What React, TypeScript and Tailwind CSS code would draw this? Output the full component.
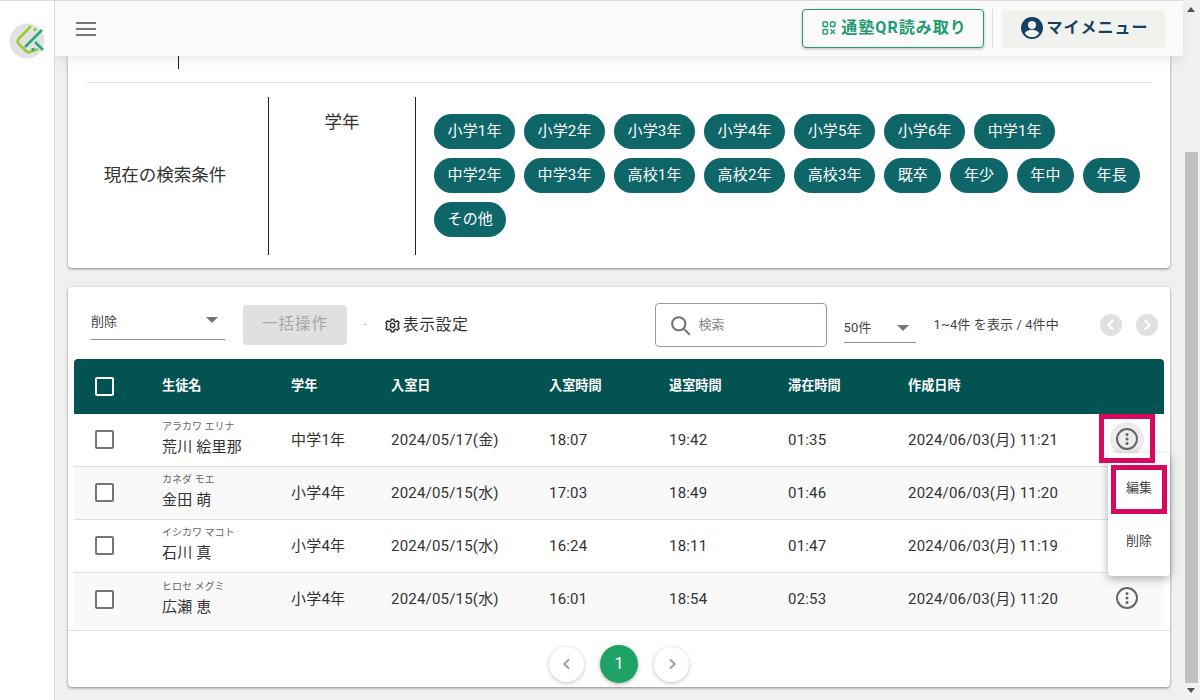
import React from "react";

const gradesRows = ["小学1年","小学2年","小学3年","小学4年","小学5年","小学6年","中学1年","中学2年","中学3年","高校1年","高校2年","高校3年","既卒","年少","年中","年長","その他"];
const students = [
  { kana: "アラカワ エリナ", name: "荒川 絵里那", grade: "中学1年", date: "2024/05/17(金)", inT: "18:07", outT: "19:42", stay: "01:35", created: "2024/06/03(月) 11:21" },
  { kana: "カネダ モエ", name: "金田 萌", grade: "小学4年", date: "2024/05/15(水)", inT: "17:03", outT: "18:49", stay: "01:46", created: "2024/06/03(月) 11:20" },
  { kana: "イシカワ マコト", name: "石川 真", grade: "小学4年", date: "2024/05/15(水)", inT: "16:24", outT: "18:11", stay: "01:47", created: "2024/06/03(月) 11:19" },
  { kana: "ヒロセ メグミ", name: "広瀬 恵", grade: "小学4年", date: "2024/05/15(水)", inT: "16:01", outT: "18:54", stay: "02:53", created: "2024/06/03(月) 11:20" },
];
const gridCols = "grid grid-cols-[88px_129px_100px_158px_120px_119px_120px_1fr] items-center";

function Kebab() {
  return (
    <svg width="24" height="24" viewBox="0 0 24 24" fill="none">
      <circle cx="12" cy="12" r="10" stroke="#666" strokeWidth="2" />
      <circle cx="12" cy="7.5" r="1.5" fill="#666" />
      <circle cx="12" cy="12" r="1.5" fill="#666" />
      <circle cx="12" cy="16.5" r="1.5" fill="#666" />
    </svg>
  );
}
function Caret() {
  return <span className="h-0 w-0 border-x-[6px] border-t-[6px] border-x-transparent border-t-[#757575]" />;
}

export default function App() {
  return (
    <div className="relative flex h-[700px] w-[1200px] overflow-hidden bg-[#eff1ee] font-['Roboto','Noto_Sans_CJK_JP',sans-serif] text-[#333]">
      <aside className="relative z-20 flex w-[55px] shrink-0 justify-center border-r border-t border-[#dcdcdc] bg-white pt-[22px]">
        <svg width="36" height="36" viewBox="0 0 36 36" className="ml-[-1px]">
          <circle cx="18" cy="18" r="17.5" fill="#e2e2e2" />
          <path d="M21 4 L9.500 16 Q8 18.500 9.500 20.500 L17.500 28.500 Q19 30 21 29 L28 26.500" fill="none" stroke="#9acb3c" strokeWidth="2.800" strokeLinecap="round" />
          <path d="M33 7 L16 24" fill="none" stroke="#2fa878" strokeWidth="2.600" />
          <path d="M26 19 L34 27" fill="none" stroke="#2fa878" strokeWidth="2.600" />
          <rect x="24.500" y="5" width="3" height="3" fill="#9acb3c" />
          <rect x="22.500" y="25" width="3" height="3" fill="#2fa878" />
        </svg>
      </aside>

      <div className="flex w-[1128px] shrink-0 flex-col">
        <header className="relative z-10 flex h-[56px] shrink-0 items-center border-t border-[#dcdcdc] bg-[#fafafa] pl-[20px] pr-[18px] shadow-[0_4px_10px_rgba(0,0,0,0.08)]">
          <svg width="22" height="16" viewBox="0 0 22 16" fill="none" stroke="#777" strokeWidth="2">
            <path d="M1 2h20M1 8h20M1 14h20" />
          </svg>
          <button className="ml-auto flex h-[39px] w-[182px] items-center justify-center gap-[5px] rounded-[4px] border-[1.5px] border-[#1f9a72] bg-[#fafafa] pb-[1px] pl-[3px] text-[16px] font-bold tracking-[1px] text-[#1f9a72] shadow-[0_1px_3px_rgba(0,0,0,0.25)]">
            <svg width="14" height="14" viewBox="0 0 14 14" fill="none" stroke="#1f9a72" strokeWidth="1.4">
              <rect x="1" y="1" width="4.5" height="4.5" rx="1" />
              <rect x="8.5" y="1" width="4.5" height="4.5" rx="1" />
              <rect x="1" y="8.5" width="4.5" height="4.5" rx="1" />
              <path d="M8.5 8.5l4.5 4.5M13 8.5l-4.5 4.5" strokeWidth="1.2" />
            </svg>
            通塾QR読み取り
          </button>
          <span className="ml-[8px] mr-[9px] h-[39px] w-px bg-[#dedede]" />
          <button className="flex h-[38px] w-[163px] items-center justify-center gap-[2px] rounded-[4px] bg-[#f0f2ee] pb-[1px] pl-[2px] text-[16px] font-bold tracking-[1px] text-[#173f5f]">
            <svg width="24" height="24" viewBox="0 0 24 24" fill="#173f5f">
              <path d="M12 1a11 11 0 1 0 0 22 11 11 0 0 0 0-22Zm0 4a4 4 0 1 1 0 8 4 4 0 0 1 0-8Zm0 16a8.6 8.6 0 0 1-7-3.6c.1-2.4 4.7-3.6 7-3.6s6.900 1.200 7 3.600A8.600 8.600 0 0 1 12 21Z" />
            </svg>
            マイメニュー
          </button>
        </header>

        <main className="flex min-h-0 flex-1 flex-col gap-[19px] overflow-hidden pl-[13px] pr-[13px]">
          <section className="shrink-0 rounded-b-[4px] bg-white px-[18px] pb-[13px] shadow-[0_1px_3px_rgba(0,0,0,0.45)]">
            <div className="h-[27px] border-b border-[#e0e0e0]">
              <span className="ml-[92px] block h-[13px] w-px bg-[#222]" />
            </div>
            <div className="mt-[14px] flex h-[158px]">
              <div className="flex w-[183px] shrink-0 items-center justify-center border-r border-[#222] pb-[2px] pr-[24px] text-[17.5px] text-[#333]">現在の検索条件</div>
              <div className="w-[147px] shrink-0 border-r border-[#222] pt-[11px] text-center text-[17.5px] leading-[28px] text-[#333]">学年</div>
              <div className="flex flex-1 flex-wrap content-start gap-x-[9px] gap-y-[9px] pl-[18px] pr-[9px] pt-[17px]">
                {gradesRows.map((g) => (
                  <span key={g} className="flex h-[35px] items-center rounded-full bg-[#0f6669] px-[13.5px] text-[15px] tracking-[0.15px] text-white">{g}</span>
                ))}
              </div>
            </div>
          </section>

          <section className="relative h-[400px] shrink-0 rounded-[4px] bg-white shadow-[0_1px_3px_rgba(0,0,0,0.45)]">
            <div className="relative flex h-[72px] items-start">
              <div className="ml-[23px] mt-[18px] flex h-[35px] w-[134px] items-start justify-between border-b border-[#8f8f8f] pl-0 pr-[7px] pt-[10px] text-[13px] leading-[14px] text-[#444]">
                <span>削除</span>
                <span className="mt-[2px] flex"><Caret /></span>
              </div>
              <button className="ml-[18px] mt-[18px] h-[40px] w-[104px] rounded-[4px] bg-[#e0e0e0] text-[15.5px] tracking-[1px] text-[#a6a6a6]">一括操作</button>
              <span className="ml-[17px] mt-[37px] h-[1px] w-[2px] bg-[#aaa]" />
              <div className="ml-[19px] mt-[26px] flex items-center gap-[3px] text-[15.5px] leading-[24px] tracking-[0.9px] text-[#333]">
                <svg width="15" height="15" viewBox="0 0 24 24" fill="none" stroke="#333" strokeWidth="2.4">
                  <circle cx="12" cy="12" r="3.5" />
                  <path d="M10 2h4l.6 3 2.500 1.100 2.600-1.600 2.800 2.800-1.600 2.600L21.900 12l-1 2.100 1.600 2.600-2.800 2.800-2.600-1.600-2.500 1.100-.6 3h-4l-.6-3-2.500-1.100-2.600 1.600-2.800-2.800 1.600-2.600L2.100 12l1-2.100-1.600-2.600 2.800-2.800 2.600 1.600L9.400 5z" strokeLinejoin="round" />
                </svg>
                表示設定
              </div>
              <div className="ml-[186px] mt-[16px] flex h-[44px] w-[172px] items-center gap-[8px] rounded-[4px] border border-[#9a9a9a] pl-[14px]">
                <svg width="21" height="21" viewBox="0 0 24 24" fill="none" stroke="#757575" strokeWidth="2.4">
                  <circle cx="10" cy="10" r="7.500" />
                  <path d="M15.500 15.500L22.500 22.500" />
                </svg>
                <span className="text-[13px] text-[#8a8a8a]">検索</span>
              </div>
              <div className="ml-[17px] mt-[29px] flex h-[27px] w-[72px] items-center justify-between border-b border-[#8f8f8f] pb-[2px] pl-0 pr-[7px] text-[13px] text-[#444]">
                <span>50件</span>
                <Caret />
              </div>
              <div className="ml-[18px] mt-[29px] text-[13px] leading-[18px] tracking-[0.1px] text-[#444]">1~4件 を表示 / 4件中</div>
              <div className="ml-[41px] mt-[27px] flex gap-[14px]">
                {["M14.500 6.500L9 12l5.500 5.500", "M9.500 6.500L15 12l-5.500 5.500"].map((d) => (
                  <span key={d} className="flex h-[22px] w-[22px] items-center justify-center rounded-full bg-[#e0e0e0]">
                    <svg width="20" height="20" viewBox="0 0 24 24" fill="none" stroke="#fff" strokeWidth="2.800"><path d={d} /></svg>
                  </span>
                ))}
              </div>
            </div>

            <div className="mx-[6px]">
              <div className={`${gridCols} h-[55px] rounded-t-[4px] bg-[#045353] pb-[1px] text-[13.2px] font-bold text-white`}>
                <span className="ml-[21px] h-[19px] w-[19px] rounded-[2px] border-[2.5px] border-white" />
                <span>生徒名</span><span>学年</span><span>入室日</span><span>入室時間</span><span>退室時間</span><span>滞在時間</span><span>作成日時</span>
              </div>
              {students.map((s, i) => (
                <div key={s.name} className={`${gridCols} h-[53px] border-b border-[#e0e0e0] text-[15px] tracking-[0.2px] text-[#333] ${i % 2 ? "bg-[#f9f9f9]" : "bg-white"} ${i === 3 ? "border-b-0" : ""}`}>
                  <span className="ml-[21px] mt-[-1px] h-[19px] w-[19px] rounded-[2px] border-2 border-[#757575] bg-white" />
                  <div className="pb-[2px]">
                    <div className="text-[10px] leading-[14px] tracking-normal text-[#666]">{s.kana}</div>
                    <div className="mt-[3px] text-[15px] leading-[21px]">{s.name}</div>
                  </div>
                  <span>{s.grade}</span><span>{s.date}</span><span>{s.inT}</span><span>{s.outT}</span><span>{s.stay}</span>
                  <div className="relative">
                    <span>{s.created}</span>
                    {i === 0 ? (
                      <span className="absolute right-[20px] top-[-7px] flex h-[34px] w-[34px] items-center justify-center rounded-full bg-[#ececec]"><Kebab /></span>
                    ) : i === 3 ? <span className="absolute right-[25px] top-[-2px] flex"><Kebab /></span> : null}
                  </div>
                </div>
              ))}
            </div>

            <div className="mt-[4px] flex h-[57px] items-center justify-center gap-[16px] border-t border-[#e3e3e3] pt-[10px]">
              <span className="flex h-[35px] w-[35px] items-center justify-center rounded-full bg-white shadow-[0_1px_4px_rgba(0,0,0,0.25)]">
                <svg width="16" height="16" viewBox="0 0 24 24" fill="none" stroke="#9e9e9e" strokeWidth="3"><path d="M15 5l-7 7 7 7" /></svg>
              </span>
              <span className="flex h-[38px] w-[38px] items-center justify-center rounded-full bg-[#1ea266] text-[17px] text-white shadow-[0_1px_4px_rgba(0,0,0,0.3)]">1</span>
              <span className="flex h-[35px] w-[35px] items-center justify-center rounded-full bg-white shadow-[0_1px_4px_rgba(0,0,0,0.25)]">
                <svg width="16" height="16" viewBox="0 0 24 24" fill="none" stroke="#9e9e9e" strokeWidth="3"><path d="M9 5l7 7-7 7" /></svg>
              </span>
            </div>
          </section>
        </main>
      </div>

      <div className="relative w-[17px] shrink-0 bg-[#f1f1f1]">
        <span className="absolute left-[4px] top-[7px] h-0 w-0 border-x-[4px] border-b-[5px] border-x-transparent border-b-[#505050]" />
        <span className="absolute bottom-[17px] left-[2px] top-[152px] w-[13px] bg-[#c1c1c1]" />
        <span className="absolute bottom-[7px] left-[4px] h-0 w-0 border-x-[4px] border-t-[5px] border-x-transparent border-t-[#505050]" />
      </div>

      <div className="absolute left-[1108px] top-[453px] z-30 flex h-[123px] w-[62px] flex-col rounded-[4px] bg-white pt-[12px] text-[13px] text-[#444] shadow-[0_3px_10px_rgba(0,0,0,0.3)]">
        <div className="flex h-[45px] items-center justify-center">編集</div>
        <div className="mt-[8px] flex h-[45px] items-center justify-center">削除</div>
      </div>
      <span className="absolute left-[1099px] top-[414px] z-40 h-[49px] w-[56px] border-[5px] border-[#d6095f]" />
      <span className="absolute left-[1111px] top-[465px] z-40 h-[49px] w-[56px] border-[5px] border-[#d6095f]" />
    </div>
  );
}
